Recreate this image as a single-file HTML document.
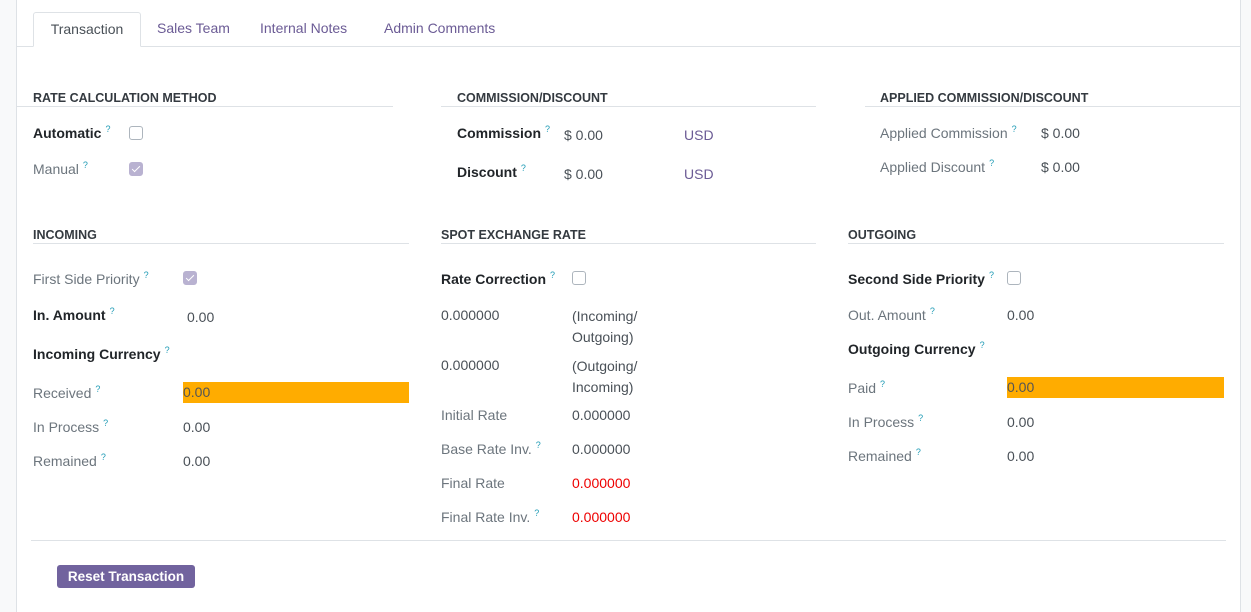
<!DOCTYPE html>
<html><head><meta charset="utf-8"><style>
*{margin:0;padding:0;box-sizing:border-box}
body{width:1251px;height:612px;background:#f8f9fa;font-family:"Liberation Sans","DejaVu Sans",sans-serif;font-size:14px;position:relative;overflow:hidden}
#sheet{position:absolute;left:16px;top:0;width:1225px;height:612px;background:#fff;border-left:1px solid #dee2e6;border-right:1px solid #dee2e6}
.a{position:absolute;line-height:18px;white-space:nowrap}
.b{color:#212529;font-weight:bold}
.l{color:#6c757d}
.v{color:#495057}
.q{color:#1f9bb5;font-size:9px;position:relative;top:-6px;margin-left:4px;font-weight:normal;line-height:0}
.h{position:absolute;font-size:12.5px;font-weight:bold;color:#343a40;line-height:16px}
.hl{position:absolute;height:1px;background:#dee2e6}
.cb{position:absolute;width:14px;height:14px;border:1px solid #adb5bd;border-radius:3px;background:#fff}
.cc{background:#b9b2d1;border-color:#b9b2d1}
.cc:after{content:"";position:absolute;left:4px;top:1px;width:3px;height:7px;border:solid #fff;border-width:0 1.5px 1.5px 0;transform:rotate(45deg)}
.hi{position:absolute;background:#ffac00;height:21px;color:#555;line-height:21px}
.tab{position:absolute;top:12px;height:35px;line-height:32px;color:#6b5b95;font-size:14px}
.red{color:#e00}
.pu{color:#6b5b95}
</style></head><body>
<div id="sheet"></div>
<div class="hl" style="left:17px;top:46px;width:1223px"></div>
<div class="tab" style="left:33px;width:108px;border:1px solid #dee2e6;border-bottom-color:#fff;border-radius:3px 3px 0 0;background:#fff;color:#495057;text-align:center">Transaction</div>
<div class="tab" style="left:157px">Sales Team</div>
<div class="tab" style="left:260px">Internal Notes</div>
<div class="tab" style="left:384px">Admin Comments</div>

<div class="h" style="left:33px;top:90px">RATE CALCULATION METHOD</div>
<div class="hl" style="left:17px;top:106px;width:376px"></div>
<div class="h" style="left:457px;top:90px">COMMISSION/DISCOUNT</div>
<div class="hl" style="left:441px;top:106px;width:375px"></div>
<div class="h" style="left:880px;top:90px">APPLIED COMMISSION/DISCOUNT</div>
<div class="hl" style="left:865px;top:106px;width:375px"></div>

<div class="a b" style="left:33px;top:124px">Automatic<span class="q">?</span></div>
<div class="cb" style="left:129px;top:126px"></div>
<div class="a l" style="left:33px;top:160px">Manual<span class="q">?</span></div>
<div class="cb cc" style="left:129px;top:162px"></div>

<div class="a b" style="left:457px;top:124px">Commission<span class="q">?</span></div>
<div class="a v" style="left:564px;top:126px">$ 0.00</div>
<div class="a pu" style="left:684px;top:126px">USD</div>
<div class="a b" style="left:457px;top:163px">Discount<span class="q">?</span></div>
<div class="a v" style="left:564px;top:165px">$ 0.00</div>
<div class="a pu" style="left:684px;top:165px">USD</div>

<div class="a l" style="left:880px;top:124px">Applied Commission<span class="q">?</span></div>
<div class="a v" style="left:1041px;top:124px">$ 0.00</div>
<div class="a l" style="left:880px;top:158px">Applied Discount<span class="q">?</span></div>
<div class="a v" style="left:1041px;top:158px">$ 0.00</div>

<div class="h" style="left:33px;top:227px">INCOMING</div>
<div class="hl" style="left:33px;top:243px;width:376px"></div>
<div class="h" style="left:441px;top:227px">SPOT EXCHANGE RATE</div>
<div class="hl" style="left:441px;top:243px;width:375px"></div>
<div class="h" style="left:848px;top:227px">OUTGOING</div>
<div class="hl" style="left:848px;top:243px;width:376px"></div>

<div class="a l" style="left:33px;top:270px">First Side Priority<span class="q">?</span></div>
<div class="cb cc" style="left:183px;top:271px"></div>
<div class="a b" style="left:33px;top:306px">In. Amount<span class="q">?</span></div>
<div class="a v" style="left:187px;top:308px">0.00</div>
<div class="a b" style="left:33px;top:345px">Incoming Currency<span class="q">?</span></div>
<div class="a l" style="left:33px;top:384px">Received<span class="q">?</span></div>
<div class="hi" style="left:183px;top:382px;width:226px">0.00</div>
<div class="a l" style="left:33px;top:418px">In Process<span class="q">?</span></div>
<div class="a v" style="left:183px;top:418px">0.00</div>
<div class="a l" style="left:33px;top:452px">Remained<span class="q">?</span></div>
<div class="a v" style="left:183px;top:452px">0.00</div>

<div class="a b" style="left:441px;top:270px">Rate Correction<span class="q">?</span></div>
<div class="cb" style="left:572px;top:271px"></div>
<div class="a v" style="left:441px;top:306px">0.000000</div>
<div class="a v" style="left:572px;top:306px;line-height:21px">(Incoming/<br>Outgoing)</div>
<div class="a v" style="left:441px;top:356px">0.000000</div>
<div class="a v" style="left:572px;top:356px;line-height:21px">(Outgoing/<br>Incoming)</div>
<div class="a l" style="left:441px;top:406px">Initial Rate</div>
<div class="a v" style="left:572px;top:406px">0.000000</div>
<div class="a l" style="left:441px;top:440px">Base Rate Inv.<span class="q">?</span></div>
<div class="a v" style="left:572px;top:440px">0.000000</div>
<div class="a l" style="left:441px;top:474px">Final Rate</div>
<div class="a red" style="left:572px;top:474px">0.000000</div>
<div class="a l" style="left:441px;top:508px">Final Rate Inv.<span class="q">?</span></div>
<div class="a red" style="left:572px;top:508px">0.000000</div>

<div class="a b" style="left:848px;top:270px">Second Side Priority<span class="q">?</span></div>
<div class="cb" style="left:1007px;top:271px"></div>
<div class="a l" style="left:848px;top:306px">Out. Amount<span class="q">?</span></div>
<div class="a v" style="left:1007px;top:306px">0.00</div>
<div class="a b" style="left:848px;top:340px">Outgoing Currency<span class="q">?</span></div>
<div class="a l" style="left:848px;top:379px">Paid<span class="q">?</span></div>
<div class="hi" style="left:1007px;top:377px;width:217px">0.00</div>
<div class="a l" style="left:848px;top:413px">In Process<span class="q">?</span></div>
<div class="a v" style="left:1007px;top:413px">0.00</div>
<div class="a l" style="left:848px;top:447px">Remained<span class="q">?</span></div>
<div class="a v" style="left:1007px;top:447px">0.00</div>

<div class="hl" style="left:31px;top:540px;width:1195px"></div>
<div style="position:absolute;left:57px;top:565px;width:138px;height:23px;background:#71639e;border-radius:3px;color:#fff;font-weight:bold;font-size:13.5px;line-height:23px;text-align:center">Reset Transaction</div>
</body></html>
